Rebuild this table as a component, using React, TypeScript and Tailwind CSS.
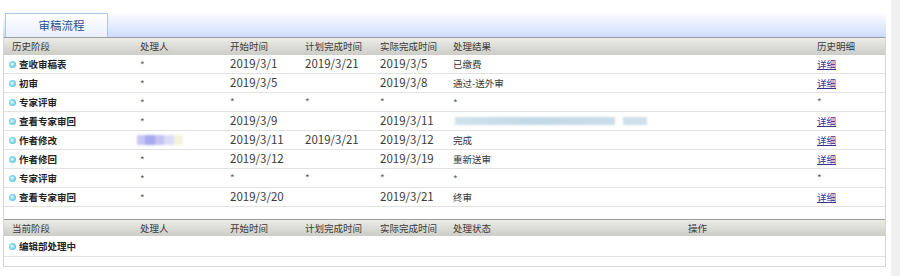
import React from "react";

type Row = {
  stage: string;
  handler: string;
  start: string;
  plan: string;
  actual: string;
  result: string;
  detail: string;
  blurHandler?: boolean;
  blurResult?: boolean;
};

const rows: Row[] = [
  { stage: "查收审稿表", handler: "*", start: "2019/3/1", plan: "2019/3/21", actual: "2019/3/5", result: "已缴费", detail: "详细" },
  { stage: "初审", handler: "*", start: "2019/3/5", plan: "", actual: "2019/3/8", result: "通过-送外审", detail: "详细" },
  { stage: "专家评审", handler: "*", start: "*", plan: "*", actual: "*", result: "*", detail: "*" },
  { stage: "查看专家审回", handler: "*", start: "2019/3/9", plan: "", actual: "2019/3/11", result: "", detail: "详细", blurResult: true },
  { stage: "作者修改", handler: "", start: "2019/3/11", plan: "2019/3/21", actual: "2019/3/12", result: "完成", detail: "详细", blurHandler: true },
  { stage: "作者修回", handler: "*", start: "2019/3/12", plan: "", actual: "2019/3/19", result: "重新送审", detail: "详细" },
  { stage: "专家评审", handler: "*", start: "*", plan: "*", actual: "*", result: "*", detail: "*" },
  { stage: "查看专家审回", handler: "*", start: "2019/3/20", plan: "", actual: "2019/3/21", result: "终审", detail: "详细" },
];

function Dot() {
  return (
    <span className="-ml-[3px] mr-[3px] inline-block h-[7px] w-[7px] shrink-0 rounded-full bg-[radial-gradient(circle_at_45%_45%,#eefbfd_0%,#8ad9ec_40%,#3db4d4_100%)]" />
  );
}

function Num({ children }: { children: React.ReactNode }) {
  if (children === "*") return <span className="text-[10px] text-[#666]">*</span>;
  return <span className="text-[11.5px] text-[#3a3a3a]">{children}</span>;
}

export default function App() {
  return (
    <div className="flex h-[276px] w-[900px] bg-white font-['Noto_Sans_CJK_SC','Microsoft_YaHei',sans-serif] text-[9.5px] text-[#333]">
      <div className="flex flex-1 flex-col pl-[3px] pr-[5px] pt-[12px]">
        {/* tab bar */}
        <div className="flex h-[25px] items-end bg-gradient-to-b from-white to-[#cddbfb] pl-[2px]">
          <div className="flex h-[24px] w-[103px] items-center justify-center border border-b-0 border-[#b3c4e4] bg-gradient-to-b from-white to-[#e9effc] pl-[10px] text-[11.5px] text-[#24508f]">
            审稿流程
          </div>
        </div>

        <div className="flex flex-col border-x border-b border-[#d6d6d6]">
          {/* header 1 */}
          <div className="flex h-[18px] items-center border-t border-[#9c9c9c] bg-gradient-to-b from-[#ececE8] to-[#cdcdc8] px-[8px] text-[#3a3a3a]">
            <div className="w-[128px]">历史阶段</div>
            <div className="w-[90px]">处理人</div>
            <div className="w-[75px]">开始时间</div>
            <div className="w-[75px]">计划完成时间</div>
            <div className="w-[73px]">实际完成时间</div>
            <div className="flex-1">处理结果</div>
            <div className="w-[60px]">历史明细</div>
          </div>

          {rows.map((r, i) => (
            <div key={i} className="flex h-[19px] items-center border-b border-[#e2e2e2] px-[8px]">
              <div className="flex w-[128px] items-center font-bold text-[#222]">
                <Dot />
                {r.stage}
              </div>
              <div className="flex w-[90px] items-center">
                {r.blurHandler ? (
                  <div className="-ml-[3px] flex h-[10px] w-[46px] blur-[1px]">
                    <div className="w-[8px] bg-[#c7c7f3]" />
                    <div className="w-[10px] bg-[#a9a9ee]" />
                    <div className="w-[9px] bg-[#c4c4f2]" />
                    <div className="w-[10px] bg-[#dcdcf7]" />
                    <div className="w-[9px] bg-[#f4f4dc]" />
                  </div>
                ) : (
                  <Num>{r.handler}</Num>
                )}
              </div>
              <div className="w-[75px]"><Num>{r.start}</Num></div>
              <div className="w-[75px]"><Num>{r.plan}</Num></div>
              <div className="w-[73px]"><Num>{r.actual}</Num></div>
              <div className="flex flex-1 items-center">
                {r.blurResult ? (
                  <div className="ml-[2px] flex h-[8px] items-center gap-[8px] blur-[1px]">
                    <div className="h-[8px] w-[160px] bg-gradient-to-r from-[#cfe2ec] via-[#c2d8e6] to-[#cbdde9]" />
                    <div className="h-[8px] w-[24px] bg-[#cfe0ea]" />
                  </div>
                ) : r.result === "*" ? (
                  <Num>*</Num>
                ) : (
                  r.result
                )}
              </div>
              <div className="w-[60px]">
                {r.detail === "详细" ? (
                  <a href="#" className="text-[#33339a] underline">
                    详细
                  </a>
                ) : (
                  <Num>{r.detail}</Num>
                )}
              </div>
            </div>
          ))}

          <div className="h-[12px]" />

          {/* header 2 */}
          <div className="flex h-[17px] items-center border-t border-[#9c9c9c] bg-gradient-to-b from-[#ececE8] to-[#cdcdc8] px-[8px] text-[#3a3a3a]">
            <div className="w-[128px]">当前阶段</div>
            <div className="w-[90px]">处理人</div>
            <div className="w-[75px]">开始时间</div>
            <div className="w-[75px]">计划完成时间</div>
            <div className="w-[73px]">实际完成时间</div>
            <div className="w-[235px]">处理状态</div>
            <div className="flex-1">操作</div>
          </div>
          <div className="flex h-[21px] items-center border-b border-[#e2e2e2] px-[8px]">
            <div className="flex w-[128px] items-center font-bold text-[#222]">
              <Dot />
              编辑部处理中
            </div>
          </div>
          <div className="h-[9px]" />
        </div>
      </div>
      <div className="w-[9px] bg-[#f0f0f0]" />
    </div>
  );
}
